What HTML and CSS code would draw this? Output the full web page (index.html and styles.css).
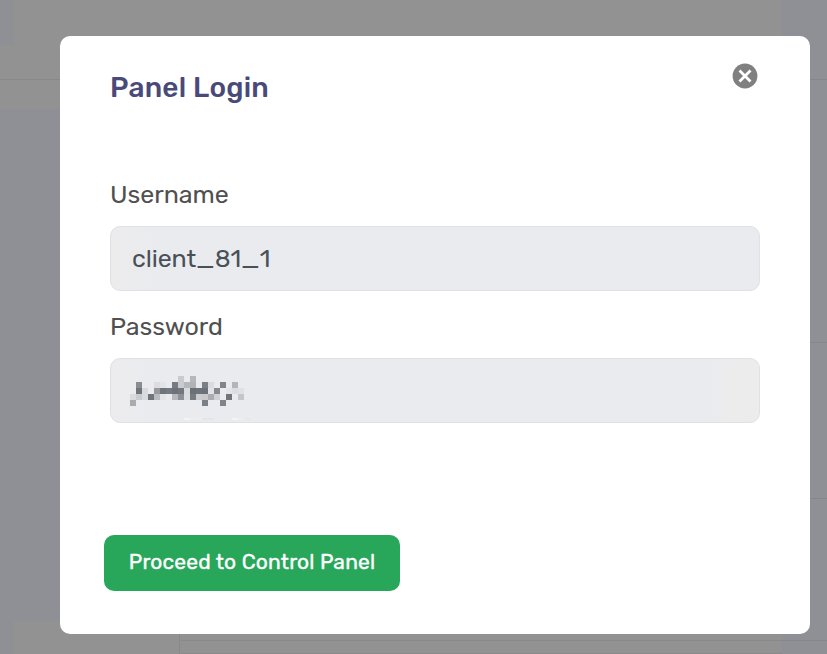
FILE: index.html
```html
<!DOCTYPE html>
<html lang="en">
<head>
  <meta charset="UTF-8">
  <meta name="viewport" content="width=device-width, initial-scale=1.0">
  <title>Panel Login</title>
  <link rel="stylesheet" href="styles.css">
</head>
<body>

  <div class="page">
    <div class="page-left">
      <div class="page-nav"><div class="page-logo"></div></div>
      <div class="page-subnav"></div>
      <div class="page-side"></div>
      <div class="page-footer"></div>
    </div>
    <div class="page-main">
      <div class="page-content"></div>
      <div class="page-bottom"><div class="page-bottom-bar"></div></div>
    </div>
    <div class="page-right">
      <div class="row row-nav"></div>
      <div class="row row-first"></div>
      <div class="row row-second"></div>
      <div class="row row-third"></div>
    </div>
  </div>

  <div class="modal">
    <div class="modal-header">
      <h2>Panel Login</h2>
      <button type="button" class="close" aria-label="Close">
        <svg width="26" height="26" viewBox="0 0 26 26">
          <circle cx="13" cy="13" r="12.4" fill="#808080"/>
          <path d="M7.5 7.5l11 11M18.5 7.5l-11 11" stroke="#fff" stroke-width="2.8"/>
        </svg>
      </button>
    </div>

    <form>
      <label>Username</label>
      <div class="field"><span>client_81_1</span></div>
      <label>Password</label>
      <div class="field field-password">
        <!-- hidden password, 6px blocks -->
        <svg class="mosaic" width="120" height="44" viewBox="0 0 120 44" shape-rendering="crispEdges"></svg>
      </div>
      <button type="submit" class="btn">Proceed to Control Panel</button>
    </form>
  </div>

  <script>
    // each row: column index and colour of the block
    const rows = [
      { 8: '#c9cace', 10: '#b6b7bb' },
      { 1: '#8a8c91', 4: '#dddde0', 5: '#e3e4e7', 7: '#757b83', 8: '#cacbcf', 9: '#b6b7bb', 10: '#b1b2b6', 12: '#797f87', 13: '#dadbdf', 15: '#80848b', 17: '#b4b5b9' },
      { 1: '#70757b', 2: '#d9dade', 4: '#95999e', 5: '#70757b', 6: '#757a80', 7: '#6d7278', 8: '#72777d', 9: '#dadbdf', 10: '#6b7076', 11: '#6e7379', 12: '#6c7177', 13: '#e2e3e6', 14: '#858a91', 16: '#e3e4e7', 17: '#dcdde0', 18: '#e0e1e4' },
      { 0: '#dadbde', 1: '#cacbcf', 2: '#dadbdf', 3: '#6f757b', 4: '#bbbcc1', 5: '#e3e4e7', 7: '#b7b8bd', 8: '#8e9096', 9: '#dcdde0', 10: '#777b81', 11: '#cbccd0', 12: '#c8c9cd', 13: '#aaacb0', 14: '#d0d1d5', 16: '#70757b', 18: '#c5c6ca' },
      { 0: '#a9abaf', 12: '#7b8087', 15: '#7f848b' }
    ];

    let blocks = '';
    rows.forEach((row, y) => {
      for (const x in row) {
        blocks += `<rect x="${x * 6}" y="${y * 6}" width="6" height="6" fill="${row[x]}"/>`;
      }
    });
    const traces = { 9: '#f4f4f6', 10: '#eeeef0', 11: '#eeeef0', 12: '#e4e5e8', 13: '#e4e5e8', 17: '#f4f4f6', 18: '#eeeef0', 19: '#e6e7ea' };
    for (const x in traces) {
      blocks += `<rect x="${x * 6}" y="42" width="6" height="2" fill="${traces[x]}"/>`;
    }
    document.querySelector('.mosaic').innerHTML = blocks;
  </script>

</body>
</html>
```

FILE: styles.css
```css
* {
  box-sizing: border-box;
}
body {
  margin: 0;
  height: 654px;
  overflow: hidden;
  font-family: Rubik, Roboto, sans-serif;
  background-color: #929293;
}
.page {
  display: flex;
  height: 654px;
}
.page-left {
  width: 179px;
  display: flex;
  flex-direction: column;
}
.page-nav {
  height: 80px;
  border-bottom: 1px solid #88888a;
}
.page-logo {
  width: 14px;
  height: 45px;
  background-color: #8f9096;
}
.page-subnav {
  height: 29px;
}
.page-side {
  flex: 1;
  background-color: #8f9096;
}
.page-footer {
  height: 33px;
  border-left: 14px solid #8f9096;
}
.page-main {
  width: 603px;
  display: flex;
  flex-direction: column;
}
.page-content {
  flex: 1;
}
.page-bottom {
  height: 20px;
  padding: 6px 0 0 1px;
  border-left: 1px solid #88888a;
}
.page-bottom-bar {
  height: 14px;
  border-top: 1px solid #88888a;
  border-bottom: 1px solid #8a8a8c;
}
.page-right {
  flex: 1;
  background-color: #8f9096;
}
.row {
  border-bottom: 1px solid #84858d;
}
.row-nav {
  height: 80px;
}
.row-first {
  height: 263px;
}
.row-second {
  height: 156px;
}
.row-third {
  height: 142px;
}
.modal {
  position: absolute;
  top: 36px;
  left: 60px;
  width: 750px;
  height: 598px;
  padding: 27px 50px 0;
  background-color: #fff;
  border-radius: 10px;
}
.modal-header {
  display: flex;
  justify-content: space-between;
  align-items: flex-start;
  height: 115px;
}
h2 {
  margin: 8px 0 0;
  font-size: 28px;
  line-height: 34px;
  font-weight: 500;
  letter-spacing: 0.25px;
  color: #494a78;
}
.close {
  width: 26px;
  height: 26px;
  margin-right: 2px;
  padding: 0;
  border: none;
  background: none;
}
.close svg {
  display: block;
}
label {
  display: block;
  height: 48px;
  line-height: 34px;
  font-size: 25px;
  color: #505050;
}
.field {
  height: 65px;
  margin-bottom: 19px;
  padding-left: 21px;
  border: 1px solid #dfe1e6;
  border-radius: 10px;
  background: linear-gradient(90deg, #ececed, #eaebef 8%, #eaebef);
  font-size: 25px;
  line-height: 63px;
  letter-spacing: -0.1px;
  color: #495057;
}
.field-password {
  margin-bottom: 112px;
  padding: 17px 0 0 19px;
  background: linear-gradient(90deg, #ececed, #eaebef 6%, #eaebef 93%, #ececed 95%);
}
.mosaic {
  display: block;
}
.btn {
  display: block;
  width: 296px;
  height: 56px;
  margin-left: -6px;
  padding: 0 0 3px;
  border: none;
  border-radius: 10px;
  background-color: #28a75b;
  color: #fff;
  font-family: inherit;
  font-size: 21px;
  font-weight: 400;
  letter-spacing: 0.17px;
  -webkit-text-stroke: 0.35px #fff;
}
```
